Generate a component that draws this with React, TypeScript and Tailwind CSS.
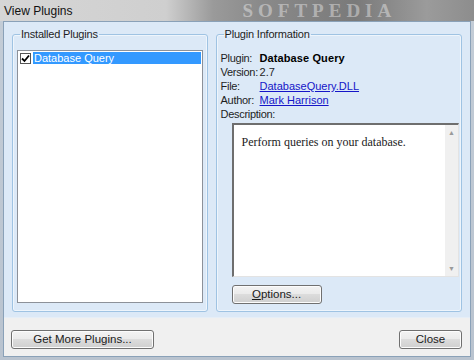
import React from 'react';

const ui = { fontFamily: '"Liberation Sans", Arial, sans-serif' };

const Btn: React.FC<{ className?: string; children: React.ReactNode }> = ({ className = '', children }) => (
  <button
    type="button"
    className={`h-[19px] rounded-[3px] border border-[#707070] bg-[linear-gradient(#f3f3f3,#ebebeb_45%,#dcdcdc_50%,#cfcfcf)] text-[11.5px] leading-none text-[#1a1a1a] shadow-[inset_0_0_0_1px_#fcfcfc] ${className}`}
    style={ui}
  >
    {children}
  </button>
);

const Group: React.FC<{ title: string; className?: string; children: React.ReactNode }> = ({ title, className = '', children }) => (
  <fieldset className={`rounded-[3px] border border-[#9fc3e3] shadow-[inset_0_0_0_1px_#eef5fc] ${className}`}>
    <legend className="ml-[3px] px-[1px] text-[11px] leading-[13px] tracking-[-0.2px] text-[#1e1e1e]">{title}</legend>
    {children}
  </fieldset>
);

export default function App() {
  const rows: [string, React.ReactNode][] = [
    ['Plugin:', <span className="text-[11px] font-bold tracking-[0.1px] text-black">Database Query</span>],
    ['Version:', '2.7'],
    ['File:', <span className="text-[#1515c8] underline">DatabaseQuery.DLL</span>],
    ['Author:', <span className="text-[#1515c8] underline">Mark Harrison</span>],
  ];

  return (
    <div className="flex h-[360px] w-[474px] flex-col overflow-hidden bg-[#6f6f6f]" style={ui}>
      {/* title bar over the blurred background */}
      <div className="flex h-[21px] shrink-0 items-center bg-[linear-gradient(90deg,#d6d6d6,#cfcfcf_35%,#9a9a9a_45%,#8a8a8a_55%,#7a7a7a_75%,#9b9b9b_90%,#8d8d8d)] pl-[4px]">
        <span className="text-[12px] text-[#111]">View Plugins</span>
        <span className="ml-[170px] text-[19px] font-bold leading-[19px] tracking-[5px] text-white/40" style={{ fontFamily: '"Liberation Serif", serif' }}>
          SOFTPEDIA
        </span>
      </div>

      <div className="flex h-[339px] shrink-0 flex-col bg-[linear-gradient(#c3ccd6,#b9c3cf)] px-[3px] pb-[3px]">
        <div className="flex flex-1 flex-col border border-[#8aa1b8] bg-[#dce9f7]">
          {/* main content */}
          <div className="flex h-[295px] shrink-0 gap-[8px] px-[8px] pt-[6px] pb-[5px]">
            <Group title="Installed Plugins" className="w-[196px] px-[4px] pb-[7px] pt-[9px]">
              <div className="h-[253px] border border-[#8c9199] bg-white p-[1px]">
                <div className="flex h-[12px] items-center">
                  <span className="mx-[1px] flex h-[11px] w-[11px] items-center justify-center border border-[#555] bg-white">
                    <svg width="9" height="9" viewBox="0 0 9 9">
                      <path d="M1 4.5 L3.5 7 L8 1.5" stroke="#000" strokeWidth="1.8" fill="none" />
                    </svg>
                  </span>
                  <span className="ml-[1px] flex h-[12px] flex-1 items-center bg-[#3399ff] pl-[1px] text-[11px] text-white">Database Query</span>
                </div>
              </div>
            </Group>

            <Group title="Plugin Information" className="w-[247px] pl-[4px] pr-[2px] pb-[7px] pt-[10px]">
              <div className="flex flex-col text-[11px] leading-[14px] tracking-[-0.3px] text-[#1e1e1e]">
                {rows.map(([k, v]) => (
                  <div key={k} className="flex">
                    <span className="w-[39px] shrink-0">{k}</span>
                    <span className="tracking-normal">{v}</span>
                  </div>
                ))}
                <span>Description:</span>
              </div>
              <div className="ml-[11px] mt-[2px] flex h-[154px] border-l-2 border-t-2 border-r border-b border-l-[#6e6e6e] border-t-[#6e6e6e] border-r-[#e3e3e3] border-b-[#e3e3e3] bg-white">
                <div className="flex-1 pl-[8px] pt-[8px] text-[12px] text-[#222]" style={{ fontFamily: '"Liberation Serif", "Times New Roman", serif' }}>
                  Perform queries on your database.
                </div>
                <div className="flex w-[13px] flex-col justify-between bg-[#f0f0f0] py-[4px] text-center text-[7px] leading-none text-[#9a9a9a]">
                  <span>▲</span>
                  <span>▼</span>
                </div>
              </div>
              <Btn className="ml-[11px] mt-[8px] w-[90px]">
                <span className="underline">O</span>ptions...
              </Btn>
            </Group>
          </div>

          {/* bottom button strip */}
          <div className="flex flex-1 items-end justify-between border-t border-[#e6eef7] bg-[#f0f0f0] pb-[7px] pl-[7px] pr-[8px]">
            <Btn className="w-[143px]">Get More Plugins...</Btn>
            <Btn className="w-[63px]">Close</Btn>
          </div>
        </div>
      </div>
    </div>
  );
}
